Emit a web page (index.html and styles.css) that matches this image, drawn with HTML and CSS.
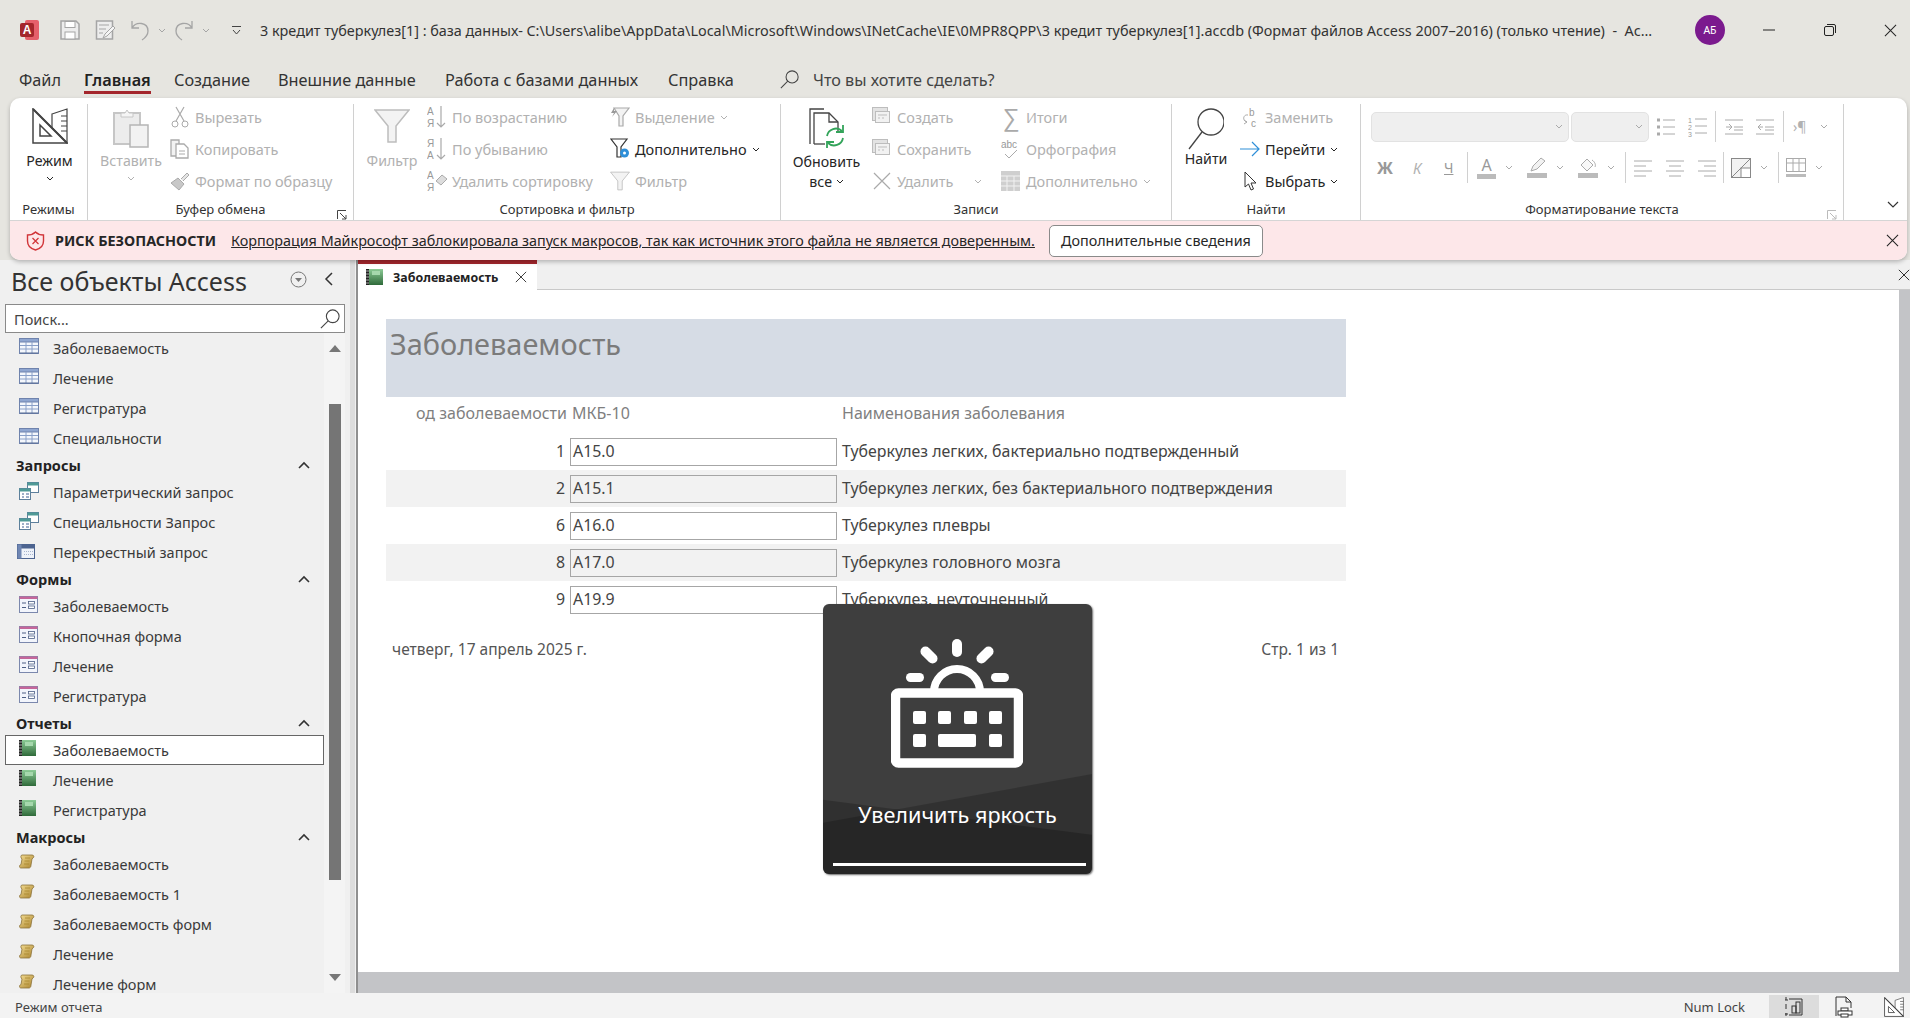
FILE: index.html
```html
<!DOCTYPE html>
<html lang="ru">
<head>
  <meta charset="UTF-8">
  <title>Заболеваемость</title>
  <link rel="stylesheet" href="styles.css">
</head>
<body>

<svg class="defs" width="0" height="0">
  <defs>
    <symbol id="chev" viewBox="0 0 8 5"><path d="M1 1l3 3 3-3" fill="none" stroke="currentColor" stroke-width="1"/></symbol>
    <symbol id="up" viewBox="0 0 12 8"><path d="M1 7l5-5 5 5" fill="none" stroke="#333" stroke-width="1.6"/></symbol>
    <symbol id="close" viewBox="0 0 14 14"><path d="M1 1l12 12M13 1L1 13" fill="none" stroke="currentColor" stroke-width="1.1"/></symbol>
    <symbol id="ruler" viewBox="0 0 36 36">
      <path d="M20 6l15-5v34L20 20z" fill="#fff" stroke="#444" stroke-width="1.2"/>
      <path d="M29 8h6M29 13h6M29 18h6M29 23h6" stroke="#444" stroke-width="1.2"/>
      <path d="M1 1l34 34H1z" fill="#fff" stroke="#444" stroke-width="1.5"/>
      <path d="M8 17l11 11H8z" fill="none" stroke="#444" stroke-width="1.5"/>
      <path d="M1 1l34 34" stroke="#444" stroke-width="2"/>
    </symbol>
    <symbol id="table" viewBox="0 0 20 16">
      <rect x=".5" y=".5" width="19" height="15" fill="#f4f7fc" stroke="#6f83ad"/>
      <rect x=".5" y=".5" width="19" height="3.5" fill="#8fa6d0" stroke="#6f83ad"/>
      <path d="M7 4v11M13 4v11M1 7.5h18M1 11h18" stroke="#8aa0c8"/>
      <path d="M1 15h18" stroke="#566a93"/>
    </symbol>
    <symbol id="query" viewBox="0 0 20 18">
      <rect x="8.500" y=".5" width="11" height="10" fill="#fff" stroke="#5d7f9c"/>
      <rect x="8.500" y=".5" width="11" height="3" fill="#4f9a96"/>
      <rect x=".5" y="6.500" width="11" height="11" fill="#fff" stroke="#5d7f9c"/>
      <rect x=".5" y="6.500" width="11" height="3" fill="#4f9a96"/>
      <path d="M3 12h2M7 12h3M3 15h2M7 15h3" stroke="#3e5f90"/>
    </symbol>
    <symbol id="cross" viewBox="0 0 18 15">
      <rect x=".5" y=".5" width="17" height="14" fill="#eef2f9" stroke="#4d6490"/>
      <rect x=".5" y=".5" width="17" height="4" fill="#4d6490"/>
      <rect x=".5" y=".5" width="4" height="14" fill="#6f86b3"/>
      <path d="M7 7.500h9M7 10.500h9" stroke="#a8b5cf" stroke-dasharray="1 1"/>
    </symbol>
    <symbol id="form" viewBox="0 0 19 17">
      <rect x=".5" y=".5" width="18" height="16" fill="#f2f5fc" stroke="#7b88ad"/>
      <rect x=".5" y=".5" width="18" height="2.500" fill="#c5669a"/>
      <path d="M3 7h4M3 11.500h4" stroke="#4d5f85"/>
      <rect x="9.500" y="5.500" width="6" height="2.500" fill="#fff" stroke="#4d5f85" stroke-width=".8"/>
      <rect x="9.500" y="10" width="6" height="2.500" fill="#fff" stroke="#4d5f85" stroke-width=".8"/>
    </symbol>
    <symbol id="report" viewBox="0 0 17 16">
      <defs><linearGradient id="gr" x1="0" y1="0" x2="0" y2="1"><stop offset="0" stop-color="#8ccb96"/><stop offset="1" stop-color="#2f6a3a"/></linearGradient></defs>
      <rect x="1" y="0" width="16" height="16" fill="url(#gr)"/>
      <rect x="0" y="0" width="3" height="16" fill="#222"/>
      <path d="M0 2h3M0 5h3M0 8h3M0 11h3M0 14h3" stroke="#cfcfcf" stroke-width=".8"/>
      <rect x="6" y="2" width="8" height="4" fill="#a6d8ad"/>
    </symbol>
    <symbol id="macro" viewBox="0 0 16 15">
      <defs><linearGradient id="gm" x1="0" y1="0" x2="1" y2="1"><stop offset="0" stop-color="#f3dc92"/><stop offset="1" stop-color="#a9822c"/></linearGradient></defs>
      <path d="M3 1h10c2 0 2.500 2 1 3l-1 1-1 6c0 2-1 3-2 3H2c-2 0-2-3 0-3.500L3 5C1.500 4 1.500 1 3 1z" fill="url(#gm)" stroke="#8a7138" stroke-width=".8"/>
      <path d="M6 4h5M5.500 7h5M5 10h5" stroke="#a8882f" stroke-width=".8"/>
    </symbol>
    <symbol id="funnel" viewBox="0 0 36 36">
      <path d="M1 2h34L22 18v16h-8V18z" fill="#f3f3f3" stroke="currentColor" stroke-width="1.5"/>
    </symbol>
    <symbol id="lens" viewBox="0 0 22 22">
      <circle cx="14" cy="8" r="7" fill="none" stroke="currentColor" stroke-width="1.2"/>
      <path d="M9 13l-8 8" stroke="currentColor" stroke-width="1.2"/>
    </symbol>
    <symbol id="records" viewBox="0 0 20 20">
      <rect x=".5" y=".5" width="15" height="13" fill="#e3e3e3" stroke="currentColor"/>
      <rect x="3.500" y="4.500" width="14" height="11" fill="#f2f2f2" stroke="currentColor"/>
      <path d="M6 8h9M6 11h2M10 11h2" stroke="currentColor"/>
    </symbol>
  </defs>
</svg>

<div class="app">

  <header class="titlebar">
    <div class="qat">
      <svg class="app-logo" width="22" height="22" viewBox="0 0 22 22">
        <rect x="6" y="1" width="14" height="20" rx="2" fill="#e5606b"/>
        <rect x="1" y="4" width="14" height="14" rx="2" fill="#a4262c"/>
        <text x="8" y="15" class="logo-a">A</text>
      </svg>
      <svg width="20" height="20" viewBox="0 0 20 20" class="q-save">
        <path d="M1 1h15l3 3v15H1z" fill="#ededed" stroke="#a5a5a5" stroke-width="1.5"/>
        <rect x="5" y="1.500" width="10" height="6" fill="#fff" stroke="#a5a5a5"/>
        <rect x="5" y="12" width="10" height="7" fill="#fff" stroke="#a5a5a5"/>
      </svg>
      <svg width="20" height="20" viewBox="0 0 20 20" class="q-form">
        <path d="M1.500 1h16v18H1.500z" fill="#ededed" stroke="#a5a5a5" stroke-width="1.500"/>
        <path d="M4 5h10M4 9h7M4 13h4" stroke="#a5a5a5"/>
        <path d="M8 18l2-4 8-8 2 2-8 8z" fill="#f5f5f5" stroke="#a5a5a5"/>
      </svg>
      <svg width="20" height="22" viewBox="0 0 20 22" class="q-undo">
        <path d="M2 2v7h7M2 9c4-7 16-6 16 3 0 4-3 7-6 9" fill="none" stroke="#a5a5a5" stroke-width="1.300"/>
      </svg>
      <svg width="8" height="5" class="q-chev"><use href="#chev"/></svg>
      <svg width="20" height="22" viewBox="0 0 20 22" class="q-redo">
        <path d="M18 2v7h-7M18 9C14 2 2 3 2 12c0 4 3 7 6 9" fill="none" stroke="#a5a5a5" stroke-width="1.300"/>
      </svg>
      <svg width="8" height="5" class="q-chev"><use href="#chev"/></svg>
      <svg width="9" height="9" viewBox="0 0 9 9" class="q-custom"><path d="M0 .5h9M1 4l3.500 4L8 4" fill="none" stroke="#444"/></svg>
    </div>
    <div class="doc-title">3 кредит туберкулез[1] : база данных- C:\Users\alibe\AppData\Local\Microsoft\Windows\INetCache\IE\0MPR8QPP\3 кредит туберкулез[1].accdb (Формат файлов Access 2007–2016) (только чтение)&nbsp; -&nbsp; Ac...</div>
    <div class="avatar">АБ</div>
    <div class="win-btns">
      <svg class="win-min" width="12" height="2" viewBox="0 0 12 2"><path d="M0 1h12" stroke="#222" stroke-width="1"/></svg>
      <svg class="win-max" width="12" height="12" viewBox="0 0 12 12"><rect x=".5" y="2.500" width="9" height="9" rx="1.500" fill="none" stroke="#222"/><path d="M3 .5h7a1.500 1.500 0 0 1 1.500 1.500v7" fill="none" stroke="#222"/></svg>
      <svg class="win-x" width="13" height="13"><use href="#close"/></svg>
    </div>
  </header>

  <nav class="menu">
    <span class="m-file">Файл</span>
    <span class="m-home">Главная</span>
    <span class="m-create">Создание</span>
    <span class="m-ext">Внешние данные</span>
    <span class="m-db">Работа с базами данных</span>
    <span class="m-help">Справка</span>
    <svg class="m-lens" width="19" height="19"><use href="#lens"/></svg>
    <span class="m-tell">Что вы хотите сделать?</span>
  </nav>

  <section class="ribbon-wrap">
    <div class="ribbon">

      <div class="group g-views">
        <div class="group-body big-only">
          <div class="big on">
            <svg width="36" height="36"><use href="#ruler"/></svg>
            <span>Режим</span>
            <svg class="big-chev" width="8" height="5"><use href="#chev"/></svg>
          </div>
        </div>
        <div class="group-label">Режимы</div>
      </div>

      <div class="group g-clip">
        <div class="group-body">
          <div class="big off big-paste">
            <svg width="36" height="40" viewBox="0 0 36 40">
              <rect x="1" y="5" width="26" height="31" fill="#ececec" stroke="#c6c6c6" stroke-width="2"/>
              <path d="M8 5h4l2-3 2 3h4v4H8z" fill="#f5f5f5" stroke="#c6c6c6"/>
              <rect x="17" y="17" width="18" height="22" fill="#f2f2f2" stroke="#b5b5b5" stroke-width="1.500"/>
            </svg>
            <span>Вставить</span>
            <svg class="big-chev" width="8" height="5"><use href="#chev"/></svg>
          </div>
          <div class="col col-clip">
            <div class="row off">
              <svg width="20" height="22" viewBox="0 0 20 22"><path d="M6 1l8 14M14 1L6 15" stroke="#aaa" stroke-width="1.200"/><circle cx="5" cy="18" r="3" fill="none" stroke="#aaa"/><circle cx="15" cy="18" r="3" fill="none" stroke="#aaa"/></svg>
              <span>Вырезать</span>
            </div>
            <div class="row off">
              <svg width="20" height="20" viewBox="0 0 20 20"><path d="M1 1h8v16H1z" fill="#f2f2f2" stroke="#aaa" stroke-width="1.300"/><path d="M6 5h8l4 4v10H6z" fill="#fff" stroke="#aaa" stroke-width="1.300"/><path d="M9 12h6M9 15h6" stroke="#aaa"/></svg>
              <span>Копировать</span>
            </div>
            <div class="row off">
              <svg width="20" height="20" viewBox="0 0 20 20"><path d="M1 12l7-5 6 6-5 6z" fill="#c8c8c8" stroke="#aaa"/><path d="M11 8l6-6 2 2-6 6" fill="#e5e5e5" stroke="#aaa"/></svg>
              <span>Формат по образцу</span>
            </div>
          </div>
        </div>
        <div class="group-label">Буфер обмена</div>
        <svg class="launcher" width="10" height="10" viewBox="0 0 10 10"><path d="M.5 9V.5H9M3 3l6 6M9 5v4H5" fill="none" stroke="#444"/></svg>
      </div>

      <div class="group g-sort">
        <div class="group-body">
          <div class="big off big-filter">
            <svg width="36" height="36" class="disabled-ico"><use href="#funnel"/></svg>
            <span>Фильтр</span>
          </div>
          <div class="col col-sort1">
            <div class="row off">
              <svg width="20" height="24" viewBox="0 0 20 24"><text x="0" y="10" class="az">А</text><text x="0" y="22" class="az">Я</text><path d="M14 1v21M10 18l4 4 4-4" fill="none" stroke="#aaa" stroke-width="1.200"/></svg>
              <span>По возрастанию</span>
            </div>
            <div class="row off">
              <svg width="20" height="24" viewBox="0 0 20 24"><text x="0" y="10" class="az">Я</text><text x="0" y="22" class="az">А</text><path d="M14 1v21M10 18l4 4 4-4" fill="none" stroke="#aaa" stroke-width="1.200"/></svg>
              <span>По убыванию</span>
            </div>
            <div class="row off">
              <svg width="20" height="24" viewBox="0 0 20 24"><text x="0" y="10" class="az">А</text><text x="0" y="22" class="az">Я</text><path d="M9 12l6-6 5 4-6 6z" fill="#ddd" stroke="#aaa"/></svg>
              <span>Удалить сортировку</span>
            </div>
          </div>
          <div class="col col-sort2">
            <div class="row off">
              <svg width="20" height="20" viewBox="0 0 20 20"><path d="M4 1h15l-6 8v10H9V9z" fill="#f3f3f3" stroke="#aaa" stroke-width="1.200"/><path d="M4 1L1 6h3L2 10l5-6H4z" fill="#999"/></svg>
              <span>Выделение</span>
              <svg class="row-chev" width="8" height="5"><use href="#chev"/></svg>
            </div>
            <div class="row on">
              <svg width="20" height="22" viewBox="0 0 20 22"><path d="M1 1h16l-6 8v10H7V9z" fill="#fff" stroke="#333" stroke-width="1.200"/><circle cx="14.500" cy="15" r="4.500" fill="#2f8fd8"/><circle cx="14.500" cy="15" r="1.500" fill="#fff"/></svg>
              <span>Дополнительно</span>
              <svg class="row-chev" width="8" height="5"><use href="#chev"/></svg>
            </div>
            <div class="row off">
              <svg width="20" height="20" class="disabled-ico"><use href="#funnel"/></svg>
              <span>Фильтр</span>
            </div>
          </div>
        </div>
        <div class="group-label">Сортировка и фильтр</div>
      </div>

      <div class="group g-rec">
        <div class="group-body">
          <div class="big on big-refresh">
            <svg width="36" height="40" viewBox="0 0 36 40">
              <path d="M1 36V1h14" fill="none" stroke="#444" stroke-width="1.300"/>
              <path d="M5 36V5h15l9 9v10" fill="#fff" stroke="#444" stroke-width="1.300"/>
              <path d="M20 5v9h9" fill="none" stroke="#444" stroke-width="1.300"/>
              <path d="M5 36h11" stroke="#444" stroke-width="1.300"/>
              <path d="M18 28a9 9 0 0 1 15-5M34 30a9 9 0 0 1-15 5" fill="none" stroke="#33a45a" stroke-width="1.800"/>
              <path d="M34 17v7h-7M18 41v-7h7" fill="none" stroke="#33a45a" stroke-width="1.800"/>
            </svg>
            <span>Обновить</span>
            <span class="big-line2">все <svg width="8" height="5"><use href="#chev"/></svg></span>
          </div>
          <div class="col col-rec1">
            <div class="row off"><svg width="20" height="20" class="disabled-ico"><use href="#records"/></svg><span>Создать</span></div>
            <div class="row off"><svg width="20" height="20" class="disabled-ico"><use href="#records"/></svg><span>Сохранить</span></div>
            <div class="row off">
              <svg width="20" height="20" viewBox="0 0 20 20"><path d="M2 2l16 16M18 2L2 18" stroke="#aaa" stroke-width="1.200"/></svg>
              <span>Удалить</span>
              <svg class="row-chev del-chev" width="8" height="5"><use href="#chev"/></svg>
            </div>
          </div>
          <div class="col col-rec2">
            <div class="row off"><span class="sigma">∑</span><span>Итоги</span></div>
            <div class="row off">
              <svg width="20" height="22" viewBox="0 0 20 22"><text x="0" y="10" class="abc">abc</text><path d="M4 16l4 4 8-8" fill="none" stroke="#aaa"/></svg>
              <span>Орфография</span>
            </div>
            <div class="row off">
              <svg width="20" height="20" viewBox="0 0 20 20"><rect x="0" y="0" width="19" height="20" fill="#cfcfcf"/><path d="M0 5h19M0 10h19M0 15h19M6 5v15M13 5v15" stroke="#f2f2f2"/></svg>
              <span>Дополнительно</span>
              <svg class="row-chev" width="8" height="5"><use href="#chev"/></svg>
            </div>
          </div>
        </div>
        <div class="group-label">Записи</div>
      </div>

      <div class="group g-find">
        <div class="group-body">
          <div class="big on big-lens">
            <svg width="36" height="42" viewBox="0 0 36 42"><circle cx="23" cy="14" r="13" fill="#fff" stroke="#444" stroke-width="1.300"/><path d="M14 24L1 41" stroke="#444" stroke-width="1.300"/></svg>
            <span>Найти</span>
          </div>
          <div class="col col-find">
            <div class="row off">
              <svg width="20" height="22" viewBox="0 0 20 22"><text x="9" y="10" class="az">b</text><text x="11" y="21" class="az">c</text><path d="M8 9C3 8 2 15 7 16M4 14l3 2-3 2" fill="none" stroke="#aaa"/></svg>
              <span>Заменить</span>
            </div>
            <div class="row on">
              <svg width="20" height="16" viewBox="0 0 20 16"><path d="M0 8h19M12 1l7 7-7 7" fill="none" stroke="#2f8fd8" stroke-width="1.200"/></svg>
              <span>Перейти</span>
              <svg class="row-chev" width="8" height="5"><use href="#chev"/></svg>
            </div>
            <div class="row on">
              <svg width="20" height="20" viewBox="0 0 20 20"><path d="M5 1v15l3.500-3 2.500 6 2.500-1-2.500-6h5z" fill="#fff" stroke="#333"/></svg>
              <span>Выбрать</span>
              <svg class="row-chev" width="8" height="5"><use href="#chev"/></svg>
            </div>
          </div>
        </div>
        <div class="group-label">Найти</div>
      </div>

      <div class="group g-format">
        <div class="group-body fmt">
          <div class="fmt-row">
            <div class="combo combo-font"><svg width="8" height="5"><use href="#chev"/></svg></div>
            <div class="combo combo-size"><svg width="8" height="5"><use href="#chev"/></svg></div>
            <svg width="20" height="20" viewBox="0 0 20 20" class="f-a"><path d="M1 3h3M1 10h3M1 17h3" stroke="#aaa" stroke-width="3"/><path d="M7 3h12M7 10h12M7 17h12" stroke="#aaa"/></svg>
            <svg width="20" height="22" viewBox="0 0 20 22" class="f-b"><text x="0" y="7" class="num">1</text><text x="0" y="14" class="num">2</text><text x="0" y="21" class="num">3</text><path d="M7 3h12M7 10h12M7 17h12" stroke="#aaa"/></svg>
            <i class="vsep"></i>
            <svg width="18" height="18" viewBox="0 0 18 18"><path d="M0 2h18M9 9h9M9 12h9M0 16h18M1 9h5M4 6l3 3-3 3" fill="none" stroke="#aaa"/></svg>
            <svg width="18" height="18" viewBox="0 0 18 18" class="f-gap"><path d="M0 2h18M9 9h9M9 12h9M0 16h18M7 9H2M5 6L2 9l3 3" fill="none" stroke="#aaa"/></svg>
            <i class="vsep"></i>
            <span class="pil">›¶</span>
            <svg class="fmt-chev" width="8" height="5"><use href="#chev"/></svg>
          </div>
          <div class="fmt-row fmt-row2">
            <span class="f-bold">Ж</span>
            <span class="f-ital">К</span>
            <span class="f-und">Ч</span>
            <i class="vsep"></i>
            <span class="f-color">А</span>
            <svg class="fmt-chev" width="8" height="5"><use href="#chev"/></svg>
            <span class="f-swatch">
              <svg width="20" height="15" viewBox="0 0 20 15"><path d="M4 14l2-5 8-8 4 3-8 8z" fill="#f2f2f2" stroke="#aaa"/></svg>
            </span>
            <svg class="fmt-chev" width="8" height="5"><use href="#chev"/></svg>
            <span class="f-swatch">
              <svg width="20" height="15" viewBox="0 0 20 15"><path d="M3 8l6-6 6 6-6 6z" fill="#f8f8f8" stroke="#aaa"/><path d="M14 3c3 2 4 5 3 7" fill="none" stroke="#aaa"/></svg>
            </span>
            <svg class="fmt-chev end" width="8" height="5"><use href="#chev"/></svg>
            <i class="vsep"></i>
            <svg width="18" height="18" viewBox="0 0 18 18" class="f-al1"><path d="M0 2h18M0 7h12M0 12h18M0 17h12" stroke="#aaa"/></svg>
            <svg width="18" height="18" viewBox="0 0 18 18" class="f-al"><path d="M0 2h18M3 7h12M0 12h18M3 17h12" stroke="#aaa"/></svg>
            <svg width="18" height="18" viewBox="0 0 18 18" class="f-al f-al3"><path d="M0 2h18M6 7h12M0 12h18M6 17h12" stroke="#aaa"/></svg>
            <i class="vsep"></i>
            <svg width="20" height="20" viewBox="0 0 20 20" class="f-grid"><rect x=".5" y=".5" width="19" height="19" fill="#f2f2f2" stroke="#888"/><path d="M.5 19.500L19 1" stroke="#888"/><rect x="10" y="10" width="9.500" height="9.500" fill="#fff" stroke="#888"/></svg>
            <svg class="fmt-chev end" width="8" height="5"><use href="#chev"/></svg>
            <i class="vsep"></i>
            <svg width="20" height="20" viewBox="0 0 20 20" class="f-grid"><rect x=".5" y=".5" width="19" height="13" fill="#fff" stroke="#aaa"/><path d="M.5 5h19M7 1v12M13 1v12" stroke="#aaa"/><path d="M0 17.500h20" stroke="#bbb" stroke-width="3"/></svg>
            <svg class="fmt-chev end" width="8" height="5"><use href="#chev"/></svg>
          </div>
        </div>
        <div class="group-label">Форматирование текста</div>
        <svg class="launcher dim" width="10" height="10" viewBox="0 0 10 10"><path d="M.5 9V.5H9M3 3l6 6M9 5v4H5" fill="none" stroke="#bbb"/></svg>
      </div>

      <svg class="collapse" width="12" height="7"><path d="M1 1l5 5 5-5" fill="none" stroke="#333" stroke-width="1.200"/></svg>
    </div>

    <div class="warning">
      <svg class="shield" width="19" height="20" viewBox="0 0 19 20">
        <path d="M9.500 1c2 2 5 3 8 3v6c0 5-4 8-8 9-4-1-8-4-8-9V4c3 0 6-1 8-3z" fill="none" stroke="#d13438" stroke-width="1.400"/>
        <path d="M6.500 7l6 6M12.500 7l-6 6" stroke="#d13438" stroke-width="1.200"/>
      </svg>
      <b>РИСК БЕЗОПАСНОСТИ</b>
      <a class="warn-link">Корпорация Майкрософт заблокировала запуск макросов, так как источник этого файла не является доверенным.</a>
      <button class="warn-btn">Дополнительные сведения</button>
      <svg class="warn-x" width="13" height="13"><use href="#close"/></svg>
    </div>
  </section>

  <div class="workspace">

    <aside class="nav">
      <div class="nav-head">
        <span class="nav-title">Все объекты Access</span>
        <svg class="nav-down" width="17" height="17" viewBox="0 0 17 17"><circle cx="8.500" cy="8.500" r="7.500" fill="none" stroke="#777"/><path d="M5 7h7l-3.500 4z" fill="#777"/></svg>
        <svg class="nav-back" width="9" height="14" viewBox="0 0 9 14"><path d="M8 1L2 7l6 6" fill="none" stroke="#333" stroke-width="1.500"/></svg>
      </div>
      <div class="nav-search">
        <span>Поиск...</span>
        <svg width="20" height="20"><use href="#lens"/></svg>
      </div>
      <div class="nav-scroll">
        <div class="nav-list">
          <div class="item"><svg width="20" height="16"><use href="#table"/></svg>Заболеваемость</div>
          <div class="item"><svg width="20" height="16"><use href="#table"/></svg>Лечение</div>
          <div class="item"><svg width="20" height="16"><use href="#table"/></svg>Регистратура</div>
          <div class="item"><svg width="20" height="16"><use href="#table"/></svg>Специальности</div>
          <div class="sect">Запросы<svg width="12" height="8"><use href="#up"/></svg></div>
          <div class="item"><svg width="20" height="18"><use href="#query"/></svg>Параметрический запрос</div>
          <div class="item"><svg width="20" height="18"><use href="#query"/></svg>Специальности Запрос</div>
          <div class="item"><svg width="18" height="15" class="ico-l"><use href="#cross"/></svg>Перекрестный запрос</div>
          <div class="sect">Формы<svg width="12" height="8"><use href="#up"/></svg></div>
          <div class="item"><svg width="19" height="17"><use href="#form"/></svg>Заболеваемость</div>
          <div class="item"><svg width="19" height="17"><use href="#form"/></svg>Кнопочная форма</div>
          <div class="item"><svg width="19" height="17"><use href="#form"/></svg>Лечение</div>
          <div class="item"><svg width="19" height="17"><use href="#form"/></svg>Регистратура</div>
          <div class="sect">Отчеты<svg width="12" height="8"><use href="#up"/></svg></div>
          <div class="item selected"><svg width="17" height="16"><use href="#report"/></svg>Заболеваемость</div>
          <div class="item"><svg width="17" height="16"><use href="#report"/></svg>Лечение</div>
          <div class="item"><svg width="17" height="16"><use href="#report"/></svg>Регистратура</div>
          <div class="sect">Макросы<svg width="12" height="8"><use href="#up"/></svg></div>
          <div class="item"><svg width="16" height="15"><use href="#macro"/></svg>Заболеваемость</div>
          <div class="item"><svg width="16" height="15"><use href="#macro"/></svg>Заболеваемость 1</div>
          <div class="item"><svg width="16" height="15"><use href="#macro"/></svg>Заболеваемость форм</div>
          <div class="item"><svg width="16" height="15"><use href="#macro"/></svg>Лечение</div>
          <div class="item"><svg width="16" height="15"><use href="#macro"/></svg>Лечение форм</div>
        </div>
        <div class="nav-bar">
          <i class="arrow-up"></i>
          <i class="thumb"></i>
          <i class="arrow-down"></i>
        </div>
      </div>
    </aside>

    <div class="splitter"></div>

    <main class="doc">
      <div class="doc-tabs">
        <div class="doc-tab">
          <svg width="17" height="16"><use href="#report"/></svg>
          <span>Заболеваемость</span>
          <svg class="tab-x" width="12" height="12"><use href="#close"/></svg>
        </div>
        <svg class="tabs-x" width="12" height="12"><use href="#close"/></svg>
      </div>
      <div class="doc-view">
        <div class="sheet">
          <div class="rep-page">
            <div class="rep-title">Заболеваемость</div>
            <div class="rep-head">
              <div class="c-num">од заболеваемости</div>
              <div class="c-code">МКБ-10</div>
              <div class="c-name">Наименования заболевания</div>
            </div>
            <div class="rep-row">
              <div class="c-num">1</div><div class="c-code"><div class="code-box">A15.0</div></div><div class="c-name">Туберкулез легких, бактериально подтвержденный</div>
            </div>
            <div class="rep-row alt">
              <div class="c-num">2</div><div class="c-code"><div class="code-box">A15.1</div></div><div class="c-name">Туберкулез легких, без бактериального подтверждения</div>
            </div>
            <div class="rep-row">
              <div class="c-num">6</div><div class="c-code"><div class="code-box">A16.0</div></div><div class="c-name">Туберкулез плевры</div>
            </div>
            <div class="rep-row alt">
              <div class="c-num">8</div><div class="c-code"><div class="code-box">A17.0</div></div><div class="c-name">Туберкулез головного мозга</div>
            </div>
            <div class="rep-row">
              <div class="c-num">9</div><div class="c-code"><div class="code-box">A19.9</div></div><div class="c-name">Туберкулез, неуточненный</div>
            </div>
            <div class="rep-foot">
              <span>четверг, 17 апрель 2025 г.</span>
              <span>Стр. 1 из 1</span>
            </div>
          </div>
        </div>
        <div class="view-right"></div>
      </div>
      <div class="view-bottom"></div>
    </main>
  </div>

  <footer class="status">
    <span class="status-text">Режим отчета</span>
    <span class="numlock">Num Lock</span>
    <div class="views">
      <span class="view-btn active">
        <svg width="18" height="22" viewBox="0 0 18 22"><path d="M4 3h13v16H4M1 1v3M1 8v5M1 17v3M0 4h3M0 18h3" fill="none" stroke="#333"/><rect x="7" y="10" width="4" height="7" fill="none" stroke="#333"/><rect x="11" y="6" width="4" height="11" fill="none" stroke="#333"/></svg>
      </span>
      <span class="view-btn">
        <svg width="18" height="22" viewBox="0 0 18 22"><path d="M1 20V1h10l5 5v6M11 1v5h5" fill="none" stroke="#333"/><rect x="6" y="12" width="7" height="3" fill="#fff" stroke="#333"/><rect x="3" y="15" width="14" height="4" fill="#fff" stroke="#333"/><rect x="6" y="18" width="7" height="3" fill="#fff" stroke="#333"/></svg>
      </span>
      <span class="view-btn">
        <svg width="20" height="20"><use href="#ruler"/></svg>
      </span>
    </div>
  </footer>

  <div class="osd">
    <div class="osd-bg"></div>
    <svg class="osd-ico" width="132" height="164" viewBox="0 0 132 164">
      <g fill="#fff">
        <rect x="61" y="0" width="10" height="18" rx="5"/>
        <rect x="33" y="6" width="10" height="20" rx="5" transform="rotate(-45 38 16)"/>
        <rect x="89" y="6" width="10" height="20" rx="5" transform="rotate(45 94 16)"/>
        <rect x="15" y="34" width="18" height="9" rx="4.500"/>
        <rect x="100" y="34" width="18" height="9" rx="4.500"/>
      </g>
      <path d="M43 53a23 23 0 0 1 46 0" fill="none" stroke="#fff" stroke-width="8"/>
      <rect x="4.500" y="54" width="123" height="70" rx="3" fill="#3e3e3e" stroke="#fff" stroke-width="9.500"/>
      <g fill="#fff">
        <rect x="22" y="72" width="13" height="13" rx="2"/>
        <rect x="47" y="72" width="13" height="13" rx="2"/>
        <rect x="73" y="72" width="13" height="13" rx="2"/>
        <rect x="98" y="72" width="13" height="13" rx="2"/>
        <rect x="22" y="95" width="13" height="13" rx="2"/>
        <rect x="47" y="95" width="38" height="13" rx="2"/>
        <rect x="98" y="95" width="13" height="13" rx="2"/>
      </g>
    </svg>
    <div class="osd-label">Увеличить яркость</div>
    <div class="osd-line"></div>
  </div>

</div>

</body>
</html>
```

FILE: styles.css
```css
* {
  box-sizing: border-box;
}

html, body {
  margin: 0;
  height: 100%;
  overflow: hidden;
}

body {
  font-family: "Noto Sans", "Open Sans", sans-serif;
  font-size: 13px;
  color: #262626;
  background: #e6e5e0;
}

.defs {
  position: absolute;
}

.app {
  position: relative;
  display: flex;
  flex-direction: column;
  width: 1910px;
  height: 1018px;
  overflow: hidden;
}

/* title bar */
.titlebar {
  display: flex;
  align-items: center;
  height: 60px;
  padding-left: 19px;
}

.qat {
  display: flex;
  align-items: center;
  width: 241px;
}

.app-logo {
  margin-right: 19px;
}

.logo-a {
  font: bold 12px "Liberation Sans", sans-serif;
  fill: #fff;
  text-anchor: middle;
}

.q-form {
  margin-left: 15px;
}

.q-undo {
  margin-left: 15px;
}

.q-chev {
  margin-left: 8px;
  color: #a5a5a5;
}

.q-redo {
  margin-left: 8px;
}

.q-custom {
  margin-left: 22px;
}

.doc-title {
  width: 1390px;
  white-space: nowrap;
  font-size: 14.4px;
  color: #333;
}

.avatar {
  display: flex;
  align-items: center;
  justify-content: center;
  width: 30px;
  height: 30px;
  margin-left: 45px;
  border-radius: 50%;
  background: #7b1a8e;
  color: #fff;
  font-size: 10.5px;
}

.win-btns {
  display: flex;
  align-items: center;
  margin-left: 38px;
}

.win-max {
  margin-left: 49px;
}

.win-x {
  margin-left: 48px;
}

/* menu tabs */
.menu {
  position: relative;
  height: 38px;
  font-size: 16.3px;
  color: #333;
}

.menu span {
  position: absolute;
  top: 9px;
  white-space: nowrap;
}

.m-file { left: 19px; }
.m-home {
  left: 84px;
  font-weight: 600;
  color: #222;
  border-bottom: 3px solid #a4262c;
}
.m-create { left: 174px; }
.m-ext { left: 278px; }
.m-db { left: 445px; }
.m-help { left: 668px; }
.m-lens {
  position: absolute;
  left: 780px;
  top: 10px;
  color: #444;
}
.menu .m-tell {
  left: 813px;
  font-size: 16.2px;
  color: #444;
}

/* ribbon */
.ribbon-wrap {
  position: relative;
  z-index: 2;
  margin: 0 3px 0 10px;
  height: 162px;
  border-radius: 10px;
  background: #fff;
  box-shadow: 0 2px 4px rgba(0, 0, 0, .25);
}

.ribbon {
  position: relative;
  display: flex;
  height: 123px;
  border-bottom: 1px solid #d5d5d5;
}

.group {
  position: relative;
  height: 116px;
  margin-top: 6px;
  border-right: 1px solid #d0d0d0;
}

.g-views { width: 78px; }
.g-clip { width: 266px; }
.g-sort { width: 427px; }
.g-rec { width: 391px; }
.g-find { width: 189px; }
.g-format { width: 483px; }

.group-body {
  display: flex;
  height: 96px;
}

.group-label {
  text-align: center;
  font-size: 13px;
  line-height: 18px;
  color: #333;
}

.launcher {
  position: absolute;
  right: 6px;
  bottom: 0;
}

.big {
  display: flex;
  flex-direction: column;
  align-items: center;
  font-size: 14.2px;
  line-height: 20px;
}

.big > svg:first-child {
  margin-top: 4px;
  margin-bottom: 7px;
}

.big-chev {
  margin-top: 5px;
}

.on {
  color: #262626;
}

.off {
  color: #b1b1b1;
}

.disabled-ico {
  color: #bdbdbd;
}

.g-views .big {
  width: 78px;
  padding-left: 2px;
}

.big-paste {
  width: 70px;
  margin-left: 8px;
}

.big-paste > svg:first-child {
  margin-bottom: 3px;
}

.big .disabled-ico {
  margin-bottom: 5px;
}

.big-filter {
  width: 76px;
}

.big-refresh {
  width: 91px;
}

.big-refresh > svg:first-child {
  margin-bottom: 4px;
}

.big-line2 svg {
  vertical-align: 3px;
}

.big-lens {
  width: 68px;
}

.big-lens > svg:first-child {
  margin-bottom: -1px;
}

.col {
  display: flex;
  flex-direction: column;
  margin-top: -3px;
}

.row {
  display: flex;
  align-items: center;
  height: 32px;
  font-size: 14.5px;
  white-space: nowrap;
}

.row > svg:first-child, .sigma {
  flex: none;
  width: 20px;
  margin-right: 5px;
}

.row-chev {
  margin-left: 5px;
}

.del-chev {
  margin-left: 20px;
}

.col-clip { margin-left: 4px; }
.col-sort1 { margin-left: -3px; width: 183px; }
.col-rec1 { width: 129px; }

.sigma {
  font-size: 24px;
  line-height: 1;
  text-align: center;
  color: #aaa;
}

.az {
  font: 10px "Liberation Sans", sans-serif;
  fill: #999;
}

.abc {
  font: 10px "Liberation Sans", sans-serif;
  fill: #999;
}

.num {
  font: 7px "Liberation Sans", sans-serif;
  fill: #999;
}

/* format group */
.group-body.fmt {
  flex-direction: column;
  padding: 7px 0 0 10px;
  color: #b1b1b1;
}

.fmt-row {
  display: flex;
  align-items: center;
  height: 31px;
}

.fmt-row2 {
  margin-top: 10px;
}

.combo {
  display: flex;
  align-items: center;
  justify-content: flex-end;
  height: 30px;
  padding-right: 5px;
  margin-right: 2px;
  background: #efefef;
  border: 1px solid #e2e2e2;
  border-radius: 5px;
  color: #aaa;
}

.combo-font { width: 198px; }
.combo-size { width: 78px; margin-right: 0; }

.f-a { margin-left: 7px; }
.f-b { margin: 0 -2px 0 12px; }

.vsep {
  width: 1px;
  height: 31px;
  background: #d0d0d0;
  margin: 0 9px;
}

.f-gap {
  margin-left: 13px;
}

.pil {
  width: 16px;
  font-size: 14px;
}

.fmt-chev {
  margin-left: 11px;
  color: #aaa;
}

.fmt-row2 .fmt-chev {
  margin: 0 14px 0 9px;
}

.fmt-row2 .fmt-chev.end {
  margin-right: 1px;
}

.f-bold {
  width: 17px;
  margin-left: 6px;
  font-size: 16px;
  font-weight: 700;
  color: #999;
}

.f-ital {
  width: 10px;
  margin-left: 19px;
  font-style: italic;
  font-size: 15px;
}

.f-und {
  width: 14px;
  margin-left: 21px;
  font-size: 14px;
  text-decoration: underline;
  color: #999;
}

.f-color {
  width: 19px;
  font-size: 16px;
  line-height: 17px;
  text-align: center;
  color: #999;
  border-bottom: 5px solid #bbb;
}

.f-swatch {
  display: block;
  height: 21px;
  border-bottom: 5px solid #bbb;
}

.f-swatch svg {
  display: block;
}

.f-al1 {
  margin-left: -1px;
}

.f-al {
  margin-left: 14px;
}

.f-al3 {
  margin-right: -2px;
}

.f-grid {
  margin-left: -2px;
}

.collapse {
  position: absolute;
  left: 1877px;
  top: 103px;
}

/* security bar */
.warning {
  position: relative;
  display: flex;
  align-items: center;
  height: 39px;
  padding-left: 16px;
  background: #fde7e9;
  border-radius: 0 0 10px 10px;
  font-size: 14.35px;
  white-space: nowrap;
}

.shield {
  flex: none;
  margin-right: 10px;
}

.warning b {
  font-weight: 700;
  margin-right: 15px;
}

.warn-link {
  text-decoration: underline;
}

.warn-btn {
  height: 32px;
  width: 214px;
  margin-left: 14px;
  padding: 0;
  background: #fff;
  border: 1px solid #8a8a8a;
  border-radius: 5px;
  font: inherit;
  color: #262626;
}

.warn-x {
  position: absolute;
  right: 8px;
  top: 13px;
  color: #222;
}

/* body */
.workspace {
  display: flex;
  flex: 1;
  min-height: 0;
  background: #f0f0f0;
}

.nav {
  display: flex;
  flex-direction: column;
  width: 350px;
  min-height: 0;
  background: #f0f0f0;
}

.nav-head {
  position: relative;
  display: flex;
  align-items: center;
  height: 44px;
  padding: 0 0 3px 11px;
  flex: none;
}

.nav-title {
  font-size: 25px;
  color: #333;
}

.nav-down {
  position: absolute;
  left: 290px;
  top: 11px;
}

.nav-back {
  position: absolute;
  left: 324px;
  top: 12px;
}

.nav-search {
  display: flex;
  align-items: center;
  justify-content: space-between;
  flex: none;
  width: 340px;
  height: 29px;
  margin-left: 5px;
  padding: 0 4px 0 8px;
  background: #fff;
  border: 1px solid #8a8a8a;
  font-size: 14.5px;
  color: #444;
}

.nav-search svg {
  color: #444;
}

.nav-scroll {
  position: relative;
  display: flex;
  flex: 1;
  min-height: 0;
  overflow: hidden;
}

.nav-list {
  width: 324px;
  padding-left: 5px;
}

.item {
  display: flex;
  align-items: center;
  height: 30px;
  padding-left: 48px;
  position: relative;
  font-size: 14.5px;
  color: #3a3a3a;
  white-space: nowrap;
}

.item svg {
  position: absolute;
  left: 14px;
  top: 5px;
}

.item svg.ico-l {
  left: 12px;
  top: 7px;
}

.item.selected {
  background: #fff;
  outline: 1px solid #666;
  outline-offset: -1px;
}

.sect {
  display: flex;
  align-items: center;
  justify-content: space-between;
  height: 24px;
  padding: 0 14px 0 11px;
  font-size: 14.5px;
  font-weight: 700;
  color: #222;
}

.nav-bar {
  position: relative;
  width: 21px;
  background: #f4f4f4;
}

.thumb {
  position: absolute;
  left: 5px;
  top: 71px;
  width: 12px;
  height: 476px;
  background: #757575;
}

.arrow-up, .arrow-down {
  position: absolute;
  left: 5px;
  width: 0;
  height: 0;
  border-left: 6px solid transparent;
  border-right: 6px solid transparent;
}

.arrow-up {
  top: 12px;
  border-bottom: 7px solid #777;
}

.arrow-down {
  top: 641px;
  border-top: 7px solid #777;
}

.splitter {
  width: 8px;
  background: #f0f0f0;
  border-left: 5px solid #dcdcdc;
  border-right: 2px solid #8f8f8f;
}

.doc {
  display: flex;
  flex-direction: column;
  flex: 1;
  min-width: 0;
}

.doc-tabs {
  position: relative;
  display: flex;
  flex: none;
  height: 30px;
  background: #f0f0f0;
  border-bottom: 1px solid #c9c9c9;
}

.doc-tab {
  display: flex;
  align-items: center;
  width: 179px;
  height: 30px;
  padding-left: 8px;
  background: #fff;
  border-top: 4px solid #a4262c;
  font-size: 12.4px;
  font-weight: 700;
  color: #222;
}

.doc-tab span {
  margin-left: 10px;
}

.tab-x {
  margin-left: 17px;
  color: #333;
}

.tabs-x {
  position: absolute;
  right: 0;
  top: 9px;
  color: #222;
}

.doc-view {
  display: flex;
  flex: 1;
  min-height: 0;
}

.sheet {
  flex: 1;
  background: #fff;
  padding: 29px 0 0 28px;
}

.view-right {
  width: 11px;
  background: #c3c4c7;
}

.view-bottom {
  flex: none;
  height: 21px;
  background: #c3c4c7;
}

/* report */
.rep-page {
  width: 960px;
  color: #555;
  font-size: 15.9px;
}

.rep-title {
  height: 78px;
  padding: 7px 0 0 4px;
  background: #d6dce5;
  font-size: 28.9px;
  line-height: 36px;
  color: #7b7b7b;
}

.rep-head, .rep-row {
  display: flex;
}

.rep-head {
  align-items: center;
  height: 36px;
  padding-bottom: 4px;
  color: #7f7f7f;
  font-size: 16px;
}

.rep-row {
  align-items: center;
  height: 37px;
  color: #444;
}

.rep-row.alt {
  background: #f2f2f2;
}

.c-num {
  width: 179px;
  text-align: right;
  white-space: nowrap;
  flex: none;
  padding-bottom: 2px;
}

.rep-head .c-num {
  width: 181px;
  padding-bottom: 0;
}

.c-code {
  width: 276px;
  flex: none;
  padding-left: 5px;
}

.rep-head .c-code {
  width: 274px;
}

.code-box {
  width: 267px;
  height: 28px;
  padding-left: 2px;
  line-height: 24px;
  border: 1px solid #a6a6a6;
}

.c-name {
  padding: 0 0 2px 1px;
  white-space: nowrap;
}

.rep-head .c-name {
  padding-bottom: 0;
}

.rep-foot {
  display: flex;
  justify-content: space-between;
  padding: 20px 7px 0 6px;
  font-size: 15.5px;
}

/* status bar */
.status {
  display: flex;
  align-items: center;
  flex: none;
  height: 25px;
  padding: 2px 0 0 15px;
  background: #f3f3f3;
  font-size: 13px;
  color: #444;
}

.numlock {
  margin-left: auto;
  margin-right: 24px;
}

.views {
  display: flex;
  height: 23px;
  margin-right: -9px;
}

.view-btn {
  display: flex;
  align-items: center;
  justify-content: center;
  width: 50px;
}

.view-btn.active {
  background: #dcdcdc;
}

/* brightness popup */
.osd {
  position: absolute;
  left: 823px;
  top: 604px;
  z-index: 5;
  width: 269px;
  height: 270px;
  border-radius: 6px;
  overflow: hidden;
  background: #3e3e3e;
  box-shadow: 1px 1px 2px rgba(0, 0, 0, .6);
}

.osd-bg {
  position: absolute;
  inset: 0;
  background: rgba(0, 0, 0, .2);
  clip-path: polygon(0 81%, 100% 63%, 100% 100%, 0 100%);
}

.osd::before {
  content: "";
  position: absolute;
  inset: 0;
  background: rgba(0, 0, 0, .22);
  clip-path: polygon(0 72.5%, 100% 85.500%, 100% 100%, 0 100%);
}

.osd-ico {
  position: absolute;
  left: 68px;
  top: 35px;
}

.osd-label {
  position: absolute;
  left: 0;
  right: 0;
  top: 196px;
  text-align: center;
  font-size: 21.6px;
  color: #fff;
}

.osd-line {
  position: absolute;
  left: 10px;
  right: 6px;
  bottom: 8px;
  height: 3px;
  background: #fff;
}
```
